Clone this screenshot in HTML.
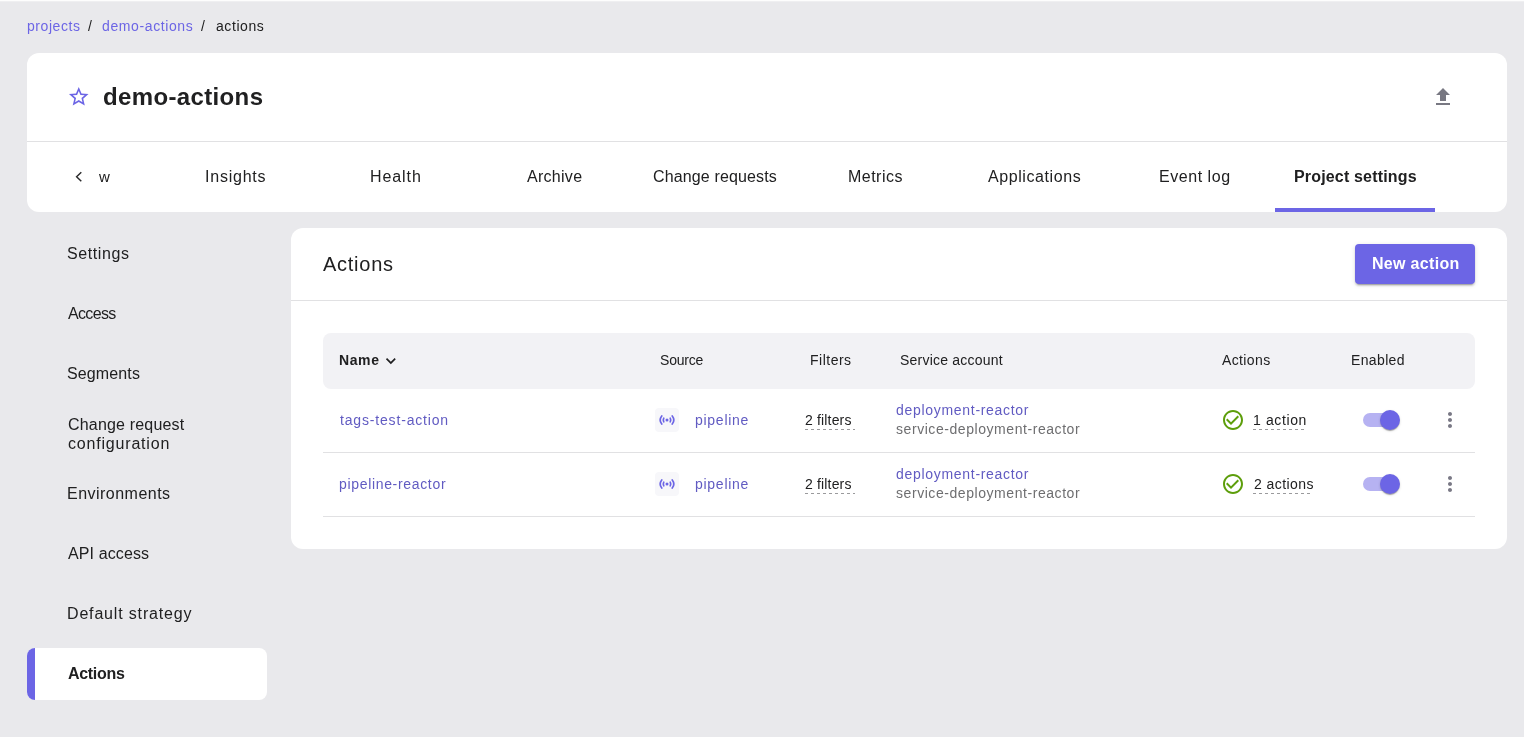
<!DOCTYPE html>
<html>
<head>
<meta charset="utf-8">
<style>
*{box-sizing:border-box;margin:0;padding:0}
html,body{width:1524px;height:737px;overflow:hidden}
body{background:#e9e9ec;font-family:"Liberation Sans",sans-serif;color:#202021;position:relative}
.t{position:absolute;white-space:nowrap;will-change:transform}
.s14{font-size:14px;line-height:14px}
.s16{font-size:16px;line-height:16px}
.b{font-weight:bold}
.pu{color:#615bc2}
.gr{color:#6e6e70}
.topline{position:absolute;left:0;top:0;width:1524px;height:2px;background:linear-gradient(#fdfdfd 0 1px,#efeff1 1px 2px)}
.box{position:absolute;background:#fff}
.ln{position:absolute;height:1px;background:#e1e1e3}
.tab{}
.dash{position:absolute;height:1px;background:repeating-linear-gradient(90deg,#9a9a9c 0 3px,transparent 3px 6px)}
.ibox{position:absolute;width:24px;height:24px;background:#f7f7fa;border-radius:4px}
.track{position:absolute;width:34px;height:14px;border-radius:7px;background:#b6b2f2}
.thumb{position:absolute;width:20px;height:20px;border-radius:50%;background:#6c65e5;box-shadow:0 2px 1px -1px rgba(0,0,0,.2),0 1px 1px 0 rgba(0,0,0,.14),0 1px 3px 0 rgba(0,0,0,.12)}
</style>
</head>
<body>
<div class="topline"></div>

<!-- breadcrumb -->
<div class="t s14" style="color:#6c65e5;left:27px;top:19px;letter-spacing:0.57px">projects</div>
<div class="t s14" style="left:88px;top:19px">/</div>
<div class="t s14" style="color:#6c65e5;left:102px;top:19px;letter-spacing:0.61px">demo-actions</div>
<div class="t s14" style="left:201px;top:19px">/</div>
<div class="t s14" style="left:215.5px;top:19px;letter-spacing:0.58px">actions</div>

<!-- header card -->
<div class="box" style="left:27px;top:53px;width:1480px;height:159px;border-radius:12px;overflow:hidden">
  <div class="ln" style="left:0;top:88px;width:1480px"></div>
  <div class="t" style="left:1248px;top:155px;width:160px;height:4px;background:#6c65e5"></div>
</div>
<svg class="t" style="left:67.2px;top:85.3px" width="23.5" height="23.5" viewBox="0 0 24 24"><path fill="#6c65e5" d="m22 9.24-7.19-.62L12 2 9.19 8.63 2 9.24l5.46 4.73L5.82 21 12 17.27 18.18 21l-1.63-7.03L22 9.24zM12 15.4l-3.76 2.27 1-4.28-3.32-2.88 4.38-.38L12 6.1l1.71 4.04 4.38.38-3.32 2.88 1 4.28L12 15.4z"/></svg>
<div class="t b" style="left:103px;top:85px;font-size:24px;line-height:24px;letter-spacing:0.36px">demo-actions</div>
<svg class="t" style="left:1431px;top:85px" width="24" height="24" viewBox="0 0 24 24"><path fill="#787882" d="M5 20h14v-2H5v2zm0-10h4v6h6v-6h4l-7-7-7 7z"/></svg>

<!-- tabs -->
<svg class="t" style="left:70px;top:166px" width="20" height="20" viewBox="0 0 20 20"><polyline points="11.3,6.3 6.6,10.8 11.3,15.3" fill="none" stroke="#2a2a2b" stroke-width="1.45"/></svg>
<div class="t s16 tab" style="left:99px;top:169px;font-size:15px">w</div>
<div class="t s16 tab" style="left:205px;top:169px;letter-spacing:0.77px">Insights</div>
<div class="t s16 tab" style="left:369.5px;top:169px;letter-spacing:0.92px">Health</div>
<div class="t s16 tab" style="left:527px;top:169px;letter-spacing:0.28px">Archive</div>
<div class="t s16 tab" style="left:652.9px;top:169px;letter-spacing:0.14px">Change requests</div>
<div class="t s16 tab" style="left:847.5px;top:169px;letter-spacing:0.48px">Metrics</div>
<div class="t s16 tab" style="left:988px;top:169px;letter-spacing:0.58px">Applications</div>
<div class="t s16 tab" style="left:1159.2px;top:169px;letter-spacing:0.54px">Event log</div>
<div class="t s16 b" style="left:1294px;top:169px;letter-spacing:0.17px">Project settings</div>

<!-- sidebar -->
<div class="t s16" style="left:66.5px;top:246px;letter-spacing:0.59px">Settings</div>
<div class="t s16" style="left:67.5px;top:306px;letter-spacing:-0.66px">Access</div>
<div class="t s16" style="left:66.5px;top:366px;letter-spacing:0.13px">Segments</div>
<div class="t s16" style="left:67.6px;top:417px;letter-spacing:0.18px">Change request</div>
<div class="t s16" style="left:67.6px;top:436px;letter-spacing:0.81px">configuration</div>
<div class="t s16" style="left:67px;top:486px;letter-spacing:0.48px">Environments</div>
<div class="t s16" style="left:67.6px;top:546px;letter-spacing:0.11px">API access</div>
<div class="t s16" style="left:67px;top:606px;letter-spacing:0.83px">Default strategy</div>
<div class="box" style="left:27px;top:648px;width:240px;height:52px;border-radius:8px;overflow:hidden"><div class="t" style="left:0;top:0;width:8px;height:52px;background:#6c65e5"></div></div>
<div class="t s16 b" style="left:67.5px;top:666px;letter-spacing:-0.31px">Actions</div>

<!-- main card -->
<div class="box" style="left:291px;top:228px;width:1216px;height:321px;border-radius:12px"></div>
<div class="t" style="left:323px;top:254px;font-size:20px;line-height:20px;letter-spacing:0.74px">Actions</div>
<div class="t b" style="left:1355px;top:244px;width:120px;height:40px;background:#6c65e5;border-radius:4px;box-shadow:0 3px 1px -2px rgba(0,0,0,.2),0 2px 2px 0 rgba(0,0,0,.14),0 1px 5px 0 rgba(0,0,0,.12)"></div>
<div class="t s16 b" style="left:1371.8px;top:256px;color:#fff;letter-spacing:0.32px">New action</div>
<div class="ln" style="left:291px;top:300px;width:1216px"></div>

<!-- table header -->
<div class="t" style="left:323px;top:333px;width:1152px;height:56px;background:#f2f2f5;border-radius:8px 8px 8px 8px"></div>
<div class="t s14 b" style="left:339px;top:353px;letter-spacing:0.60px">Name</div>
<svg class="t" style="left:381.3px;top:351.3px" width="19.7" height="19.7" viewBox="0 0 24 24"><path fill="#202021" d="M7.41 8.59 12 13.17l4.59-4.58L18 10l-6 6-6-6 1.41-1.41z"/></svg>
<div class="t s14" style="left:660px;top:353px;letter-spacing:-0.20px">Source</div>
<div class="t s14" style="left:810px;top:353px;letter-spacing:0.50px">Filters</div>
<div class="t s14" style="left:900px;top:353px;letter-spacing:0.21px">Service account</div>
<div class="t s14" style="left:1221.6px;top:353px;letter-spacing:0.37px">Actions</div>
<div class="t s14" style="left:1351px;top:353px;letter-spacing:0.36px">Enabled</div>

<!-- row 1 -->
<div class="t s14 pu" style="left:339.8px;top:413px;letter-spacing:0.83px">tags-test-action</div>
<div class="ibox" style="left:655px;top:408px"></div>
<svg class="t" style="left:655px;top:408px" width="24" height="24" viewBox="0 0 24 24" fill="none" stroke="#6c65e5" stroke-width="1.7" stroke-linecap="round"><path d="M6.77 7.9A6.65 6.65 0 0 0 6.77 16.1M17.23 7.9A6.65 6.65 0 0 1 17.23 16.1M8.77 10.2A3.7 3.7 0 0 0 8.77 13.8M15.23 10.2A3.7 3.7 0 0 1 15.23 13.8"/><circle cx="12" cy="12" r="1.5" fill="#6c65e5" stroke="none"/></svg>
<div class="t s14 pu" style="left:694.5px;top:413px;letter-spacing:0.73px">pipeline</div>
<div class="t s14" style="left:805px;top:413px;letter-spacing:0.16px">2 filters</div>
<div class="dash" style="left:805px;top:429px;width:50px"></div>
<div class="t s14 pu" style="left:895.7px;top:403px;letter-spacing:0.70px">deployment-reactor</div>
<div class="t s14 gr" style="left:895.7px;top:422px;letter-spacing:0.56px">service-deployment-reactor</div>
<svg class="t" style="left:1221px;top:408px" width="24" height="24" viewBox="0 0 24 24"><path fill="#5d9e0b" d="M16.59 7.58 10 14.17l-3.59-3.58L5 12l5 5 8-8zM12 2C6.48 2 2 6.48 2 12s4.48 10 10 10 10-4.48 10-10S17.52 2 12 2zm0 18c-4.42 0-8-3.58-8-8s3.58-8 8-8 8 3.58 8 8-3.58 8-8 8z"/></svg>
<div class="t s14" style="left:1253px;top:413px;letter-spacing:0.62px">1 action</div>
<div class="dash" style="left:1253px;top:429px;width:51px"></div>
<div class="track" style="left:1363px;top:413px"></div>
<div class="thumb" style="left:1380px;top:410px"></div>
<svg class="t" style="left:1438px;top:408px" width="24" height="24" viewBox="0 0 24 24"><path fill="#797885" d="M12 8c1.1 0 2-.9 2-2s-.9-2-2-2-2 .9-2 2 .9 2 2 2zm0 2c-1.1 0-2 .9-2 2s.9 2 2 2 2-.9 2-2-.9-2-2-2zm0 6c-1.1 0-2 .9-2 2s.9 2 2 2 2-.9 2-2-.9-2-2-2z"/></svg>
<div class="ln" style="left:323px;top:452px;width:1152px"></div>

<!-- row 2 -->
<div class="t s14 pu" style="left:339px;top:477px;letter-spacing:0.67px">pipeline-reactor</div>
<div class="ibox" style="left:655px;top:472px"></div>
<svg class="t" style="left:655px;top:472px" width="24" height="24" viewBox="0 0 24 24" fill="none" stroke="#6c65e5" stroke-width="1.7" stroke-linecap="round"><path d="M6.77 7.9A6.65 6.65 0 0 0 6.77 16.1M17.23 7.9A6.65 6.65 0 0 1 17.23 16.1M8.77 10.2A3.7 3.7 0 0 0 8.77 13.8M15.23 10.2A3.7 3.7 0 0 1 15.23 13.8"/><circle cx="12" cy="12" r="1.5" fill="#6c65e5" stroke="none"/></svg>
<div class="t s14 pu" style="left:694.5px;top:477px;letter-spacing:0.73px">pipeline</div>
<div class="t s14" style="left:805px;top:477px;letter-spacing:0.16px">2 filters</div>
<div class="dash" style="left:805px;top:493px;width:50px"></div>
<div class="t s14 pu" style="left:895.7px;top:467px;letter-spacing:0.70px">deployment-reactor</div>
<div class="t s14 gr" style="left:895.7px;top:486px;letter-spacing:0.56px">service-deployment-reactor</div>
<svg class="t" style="left:1221px;top:472px" width="24" height="24" viewBox="0 0 24 24"><path fill="#5d9e0b" d="M16.59 7.58 10 14.17l-3.59-3.58L5 12l5 5 8-8zM12 2C6.48 2 2 6.48 2 12s4.48 10 10 10 10-4.48 10-10S17.52 2 12 2zm0 18c-4.42 0-8-3.58-8-8s3.58-8 8-8 8 3.58 8 8-3.58 8-8 8z"/></svg>
<div class="t s14" style="left:1253.7px;top:477px;letter-spacing:0.42px">2 actions</div>
<div class="dash" style="left:1253px;top:493px;width:57px"></div>
<div class="track" style="left:1363px;top:477px"></div>
<div class="thumb" style="left:1380px;top:474px"></div>
<svg class="t" style="left:1438px;top:472px" width="24" height="24" viewBox="0 0 24 24"><path fill="#797885" d="M12 8c1.1 0 2-.9 2-2s-.9-2-2-2-2 .9-2 2 .9 2 2 2zm0 2c-1.1 0-2 .9-2 2s.9 2 2 2 2-.9 2-2-.9-2-2-2zm0 6c-1.1 0-2 .9-2 2s.9 2 2 2 2-.9 2-2-.9-2-2-2z"/></svg>
<div class="ln" style="left:323px;top:516px;width:1152px"></div>
</body>
</html>
